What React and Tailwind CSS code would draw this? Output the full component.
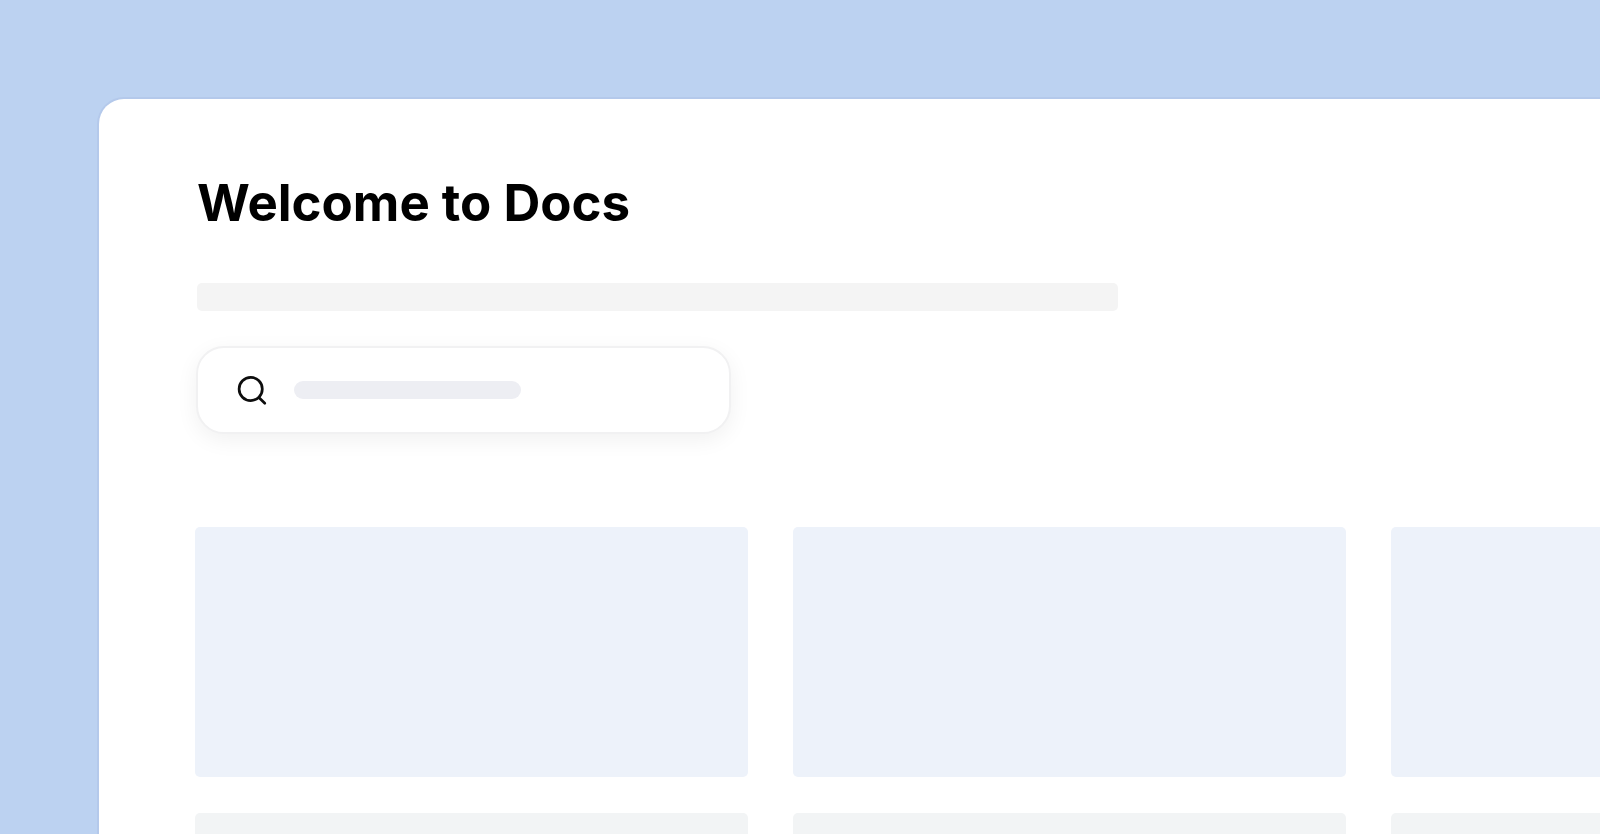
function SearchIcon() {
  return (
    <svg
      className="size-8 shrink-0 text-[#0d0d0d]"
      viewBox="0 0 32 32"
      fill="none"
      stroke="currentColor"
      strokeWidth="2.7"
      strokeLinecap="round"
      aria-hidden="true"
    >
      <circle cx="14.7" cy="15" r="11.6" />
      <path d="M23.4 24 28.8 29.2" />
    </svg>
  );
}

function SearchBox() {
  return (
    <label className="mt-[35px] -ml-px flex h-[88px] w-[535px] max-w-full items-center gap-[26px] rounded-[28px] border-2 border-[#f1f1f2] bg-white pl-[38px] shadow-[0_6px_22px_rgba(0,0,0,0.06)]">
      <SearchIcon />
      <input
        type="search"
        aria-label="Search docs"
        className="h-[18px] w-[227px] appearance-none rounded-full bg-[#edeef3] px-3 text-xs outline-none"
      />
    </label>
  );
}

function DocCard() {
  return (
    <div className="flex flex-col gap-9">
      <div className="h-[250px] rounded-[5px] bg-[#edf2fa]" />
      <div className="h-7 rounded-[5px] bg-[#f2f4f5]" />
    </div>
  );
}

export default function App() {
  const docs = [1, 2, 3];

  return (
    <div className="flex h-screen flex-col overflow-hidden bg-[#bcd2f1] pt-[97px] pl-[97px] font-[Inter,sans-serif]">
      <main className="min-h-0 flex-1 overflow-hidden rounded-tl-[27px] border-t-2 border-l-2 border-[#b4c9eb] bg-white pt-[72px] pl-24">
        {/* Header */}
        <header className="flex flex-col items-start pl-0.5">
          <h1 className="text-[51px] leading-[64px] font-bold text-black">Welcome to Docs</h1>
          <div className="mt-12 h-7 w-[921px] max-w-full rounded-[5px] bg-[#f4f4f4]" />
          <SearchBox />
        </header>

        {/* Doc cards, the last one runs past the right edge */}
        <section className="mt-[93px] -mr-[344px] grid grid-cols-3 gap-x-[45px]">
          {docs.map((doc) => (
            <DocCard key={doc} />
          ))}
        </section>
      </main>
    </div>
  );
}
